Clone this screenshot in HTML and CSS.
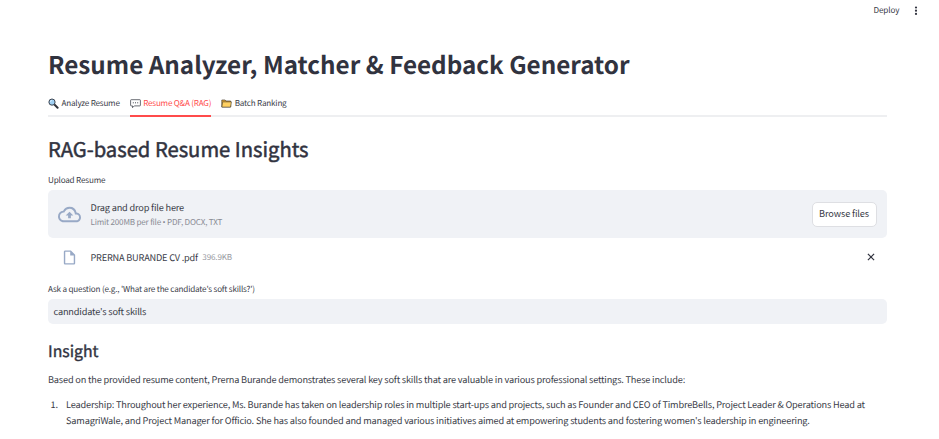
FILE: index.html
```html
<!DOCTYPE html>
<html lang="en">
<head>
<meta charset="utf-8">
<title>Resume Analyzer</title>
<link rel="stylesheet" href="styles.css">
</head>
<body>
<header class="toolbar">
  <span class="deploy">Deploy</span>
  <svg class="kebab" viewBox="0 0 4 10"><circle cx="2" cy="1.5" r="1.1"/><circle cx="2" cy="4.7" r="1.1"/><circle cx="2" cy="7.9" r="1.1"/></svg>
</header>
<main class="page">
  <h1><span>Resume Analyzer, Matcher &amp; Feedback Generator</span></h1>
  <nav class="tabs">
    <a class="tab"><svg class="tab-icon" viewBox="0 0 11 11"><path d="M6.4 6.5 9.6 9.7" stroke="#30333a" stroke-width="2" stroke-linecap="round"/><circle cx="4" cy="4.1" r="3.1" fill="#9fd0f3" stroke="#3e4652" stroke-width="1"/><path d="M2.4 4A1.7 1.7 0 0 1 4 2.4" stroke="#e6f5ff" stroke-width=".7" fill="none"/></svg><span>Analyze Resume</span></a>
    <a class="tab active"><svg class="tab-icon" viewBox="0 0 11 11"><path d="M1.2 1.7h8.6q.6 0 .6.6v5q0 .6-.6.6H4.3L2.5 9.7V7.9H1.2q-.6 0-.6-.6v-5q0-.6.6-.6Z" fill="#fff" stroke="#454952" stroke-width=".8"/><path d="M2.8 4.8h1M5 4.8h1M7.2 4.8h1" stroke="#454952" stroke-width="1"/></svg><span>Resume Q&amp;A (RAG)</span></a>
    <a class="tab"><svg class="tab-icon" viewBox="0 0 11 11"><path d="M.8 9V2h3.3l.9 1h4.7v6Z" fill="#e5a62e" stroke="#4d4434" stroke-width=".7"/><path d="M.9 9.1 1.7 3.9h8.7L9.5 9.1Z" fill="#ffd061" stroke="#4d4434" stroke-width=".6"/></svg><span>Batch Ranking</span></a>
  </nav>
  <h2><span>RAG-based Resume Insights</span></h2>
  <div class="label upload-label"><span>Upload Resume</span></div>
  <section class="dropzone">
    <svg class="cloud" viewBox="0 0 24 24"><path d="M19.35 10.04A7.49 7.49 0 0 0 12 4C9.11 4 6.6 5.64 5.35 8.04A5.994 5.994 0 0 0 0 14c0 3.31 2.69 6 6 6h13c2.76 0 5-2.24 5-5 0-2.64-2.05-4.78-4.65-4.96zM19 18H6c-2.21 0-4-1.79-4-4 0-2.05 1.53-3.76 3.56-3.97l1.07-.11.5-.95A5.469 5.469 0 0 1 12 6c2.62 0 4.88 1.86 5.39 4.43l.3 1.5 1.53.11A2.98 2.98 0 0 1 22 15c0 1.65-1.35 3-3 3zM8 13h2.55v3h2.9v-3H16l-4-4z"/></svg>
    <div class="drop-text">
      <div class="drop-title"><span>Drag and drop file here</span></div>
      <div class="drop-hint"><span>Limit 200MB per file <span class="bullet">•</span> PDF, DOCX, TXT</span></div>
    </div>
    <button class="browse"><span>Browse files</span></button>
  </section>
  <div class="file">
    <svg class="doc" viewBox="0 0 24 24"><path d="M14 2H6c-1.1 0-2 .9-2 2v16c0 1.1.89 2 1.99 2H18c1.1 0 2-.9 2-2V8l-6-6zM6 20V4h7v5h5v11H6z"/></svg>
    <span class="file-name">PRERNA BURANDE CV .pdf</span>
    <span class="file-size">396.9KB</span>
    <svg class="close" viewBox="0 0 8 8"><path d="M.9.9 7.1 7.1M7.1.9.9 7.1"/></svg>
  </div>
  <div class="label question-label"><span>Ask a question (e.g., 'What are the candidate's soft skills?')</span></div>
  <div class="input"><span>canndidate's soft skills</span></div>
  <h3><span>Insight</span></h3>
  <p><span>Based on the provided resume content, Prerna Burande demonstrates several key soft skills that are valuable in various professional settings. These include:</span></p>
  <ol>
    <li><span class="num">1.</span><div><span>Leadership: Throughout her experience, Ms. Burande has taken on leadership roles in multiple start-ups and projects, such as Founder and CEO of TimbreBells, Project Leader &amp; Operations Head at</span><br><span>SamagriWale, and Project Manager for Officio. She has also founded and managed various initiatives aimed at empowering students and fostering women's leadership in engineering.</span></div></li>
  </ol>
</main>
</body>
</html>
```
FILE: styles.css
```css
* { box-sizing: border-box; }
body { margin: 0; width: 939px; height: 439px; overflow: hidden; background: #fff; color: #393b47; font-family: "Noto Sans CJK SC", "Noto Sans", sans-serif; font-size: 9.2px; letter-spacing: -.175px; white-space: nowrap; text-rendering: geometricPrecision; }
h1, h2, h3, p, ol { margin: 0; padding: 0; }
h1, h2, h3 { color: #31333f; letter-spacing: 0; }
svg { flex: none; display: block; }
.toolbar { height: 21px; padding-left: 873.5px; display: flex; align-items: center; font-size: 8.1px; }
.deploy { width: 40.5px; letter-spacing: -.1px; }
.kebab { width: 4px; height: 10px; fill: #31333f; }
.page { width: 838.5px; margin-left: 48px; }
h1 { margin-top: 23px; height: 40px; line-height: 40px; font-size: 24.25px; font-weight: 700; }
.tabs { margin-top: 7px; height: 26px; display: flex; gap: 10px; border-bottom: 2px solid #eeeff1; font-size: 8.1px; letter-spacing: -.2px; }
.tab { height: 26px; padding-bottom: 2px; display: flex; align-items: center; gap: 2.5px; }
.tab-icon { width: 11px; height: 11px; }
.active { color: #ff4b4b; border-bottom: 2px solid #ff4b4b; padding-bottom: 0; }
h2 { margin-top: 16px; height: 32px; line-height: 32px; font-size: 20.2px; font-weight: 400; -webkit-text-stroke: .5px; }
.label { font-size: 8.1px; line-height: 14px; }
.upload-label { margin-top: 8px; height: 17px; line-height: 15px; }
.dropzone { height: 48px; padding: 0 10px; display: flex; align-items: center; background: #f0f2f6; border-radius: 5px; }
.cloud { width: 23px; height: 23px; fill: #98a9c6; }
.drop-text { margin-left: 9.5px; flex: 1; }
.drop-title { height: 16px; line-height: 17px; }
.drop-hint { height: 14px; line-height: 15px; font-size: 8.1px; letter-spacing: -.2px; color: #898b94; }
.bullet { font-family: "Noto Sans", sans-serif; }
.browse { width: 65px; height: 25px; padding: 0 0 2px; border: 1px solid #dedfe3; border-radius: 5px; background: #fff; color: #393b47; font: inherit; letter-spacing: -.12px; }
.file { height: 38px; padding: 0 12px 0 13px; display: flex; align-items: center; }
.doc { width: 17px; height: 17px; fill: #98a9c6; }
.file-name { margin-left: 12.5px; letter-spacing: -.2px; }
.file-size { margin-left: 4.5px; font-size: 8.1px; color: #9799a1; }
.close { margin-left: auto; width: 8px; height: 8px; stroke: #31333f; stroke-width: 1.2; }
.question-label { margin-top: 7px; height: 16px; }
.input { height: 24.5px; padding-left: 5.5px; line-height: 25px; background: #f0f2f6; border-radius: 5px; }
h3 { margin-top: 15.5px; height: 24px; line-height: 24px; font-size: 15.8px; font-weight: 400; -webkit-text-stroke: .4px; }
p { margin-top: 7.5px; height: 16px; line-height: 16px; }
ol { margin-top: 10.5px; list-style: none; line-height: 15.7px; }
li { display: flex; }
.num { width: 18px; padding-left: 2.5px; }
```
